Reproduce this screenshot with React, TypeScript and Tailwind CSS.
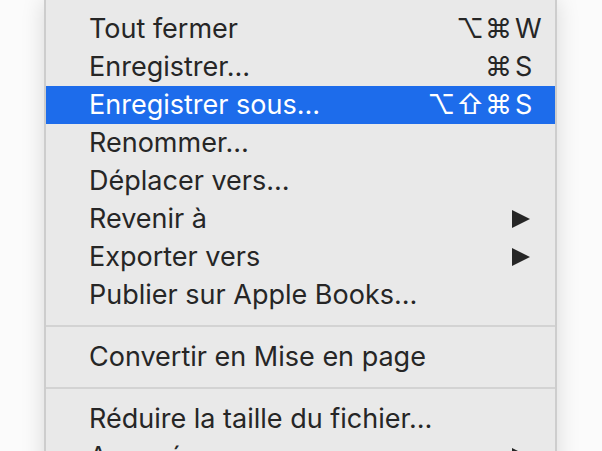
import React from 'react';

type Item =
  | { type: 'item'; label: string; mods?: string; keyChar?: string; submenu?: boolean; active?: boolean }
  | { type: 'sep' };

const items: Item[] = [
  { type: 'item', label: 'Tout fermer', mods: '⌥⌘', keyChar: 'W' },
  { type: 'item', label: 'Enregistrer…', mods: '⌘', keyChar: 'S' },
  { type: 'item', label: 'Enregistrer sous…', mods: '⌥⇧⌘', keyChar: 'S', active: true },
  { type: 'item', label: 'Renommer…' },
  { type: 'item', label: 'Déplacer vers…' },
  { type: 'item', label: 'Revenir à', submenu: true },
  { type: 'item', label: 'Exporter vers', submenu: true },
  { type: 'item', label: 'Publier sur Apple Books…' },
  { type: 'sep' },
  { type: 'item', label: 'Convertir en Mise en page' },
  { type: 'sep' },
  { type: 'item', label: 'Réduire la taille du fichier…' },
  { type: 'item', label: 'Avancé', submenu: true },
];

function Arrow({ active }: { active?: boolean }) {
  return (
    <svg width="19" height="18" viewBox="0 0 19 18" className={active ? 'text-white' : 'text-[#262626]'}>
      <path d="M1 0 L19 9 L1 18 Z" fill="currentColor" />
    </svg>
  );
}

function MenuRow({ item }: { item: Extract<Item, { type: 'item' }> }) {
  return (
    <div
      className={
        'flex h-[38px] items-center pl-[43px] pr-[8px] ' +
        (item.active ? 'bg-[#1d6ceb] text-white' : 'text-[#262626]')
      }
    >
      <span className="flex-1 whitespace-nowrap">{item.label}</span>
      {item.keyChar && (
        <span className="flex items-center">
          <span className="text-right tracking-[1px]">{item.mods}</span>
          <span className="w-[34px] pl-[2px] text-left">{item.keyChar}</span>
        </span>
      )}
      {item.submenu && (
        <span className="flex w-[36px] justify-start">
          <Arrow active={item.active} />
        </span>
      )}
    </div>
  );
}

export default function App() {
  return (
    <div className="h-[451px] w-[602px] overflow-hidden bg-[#fbfbfb]">
      <div
        className="ml-[44px] w-[513px] border-x-2 border-[#cdcdcd] bg-[#e9e9e9] pt-[10px] text-[27px] leading-[38px] shadow-[0_0_22px_rgba(0,0,0,0.14)]"
        style={{ fontFamily: 'Inter, "Liberation Sans", sans-serif' }}
      >
        {items.map((item, i) =>
          item.type === 'sep' ? (
            <div key={i} className="flex h-[24px] items-center">
              <div className="h-[2px] w-full bg-[#d3d3d3]" />
            </div>
          ) : (
            <MenuRow key={i} item={item} />
          )
        )}
      </div>
    </div>
  );
}
